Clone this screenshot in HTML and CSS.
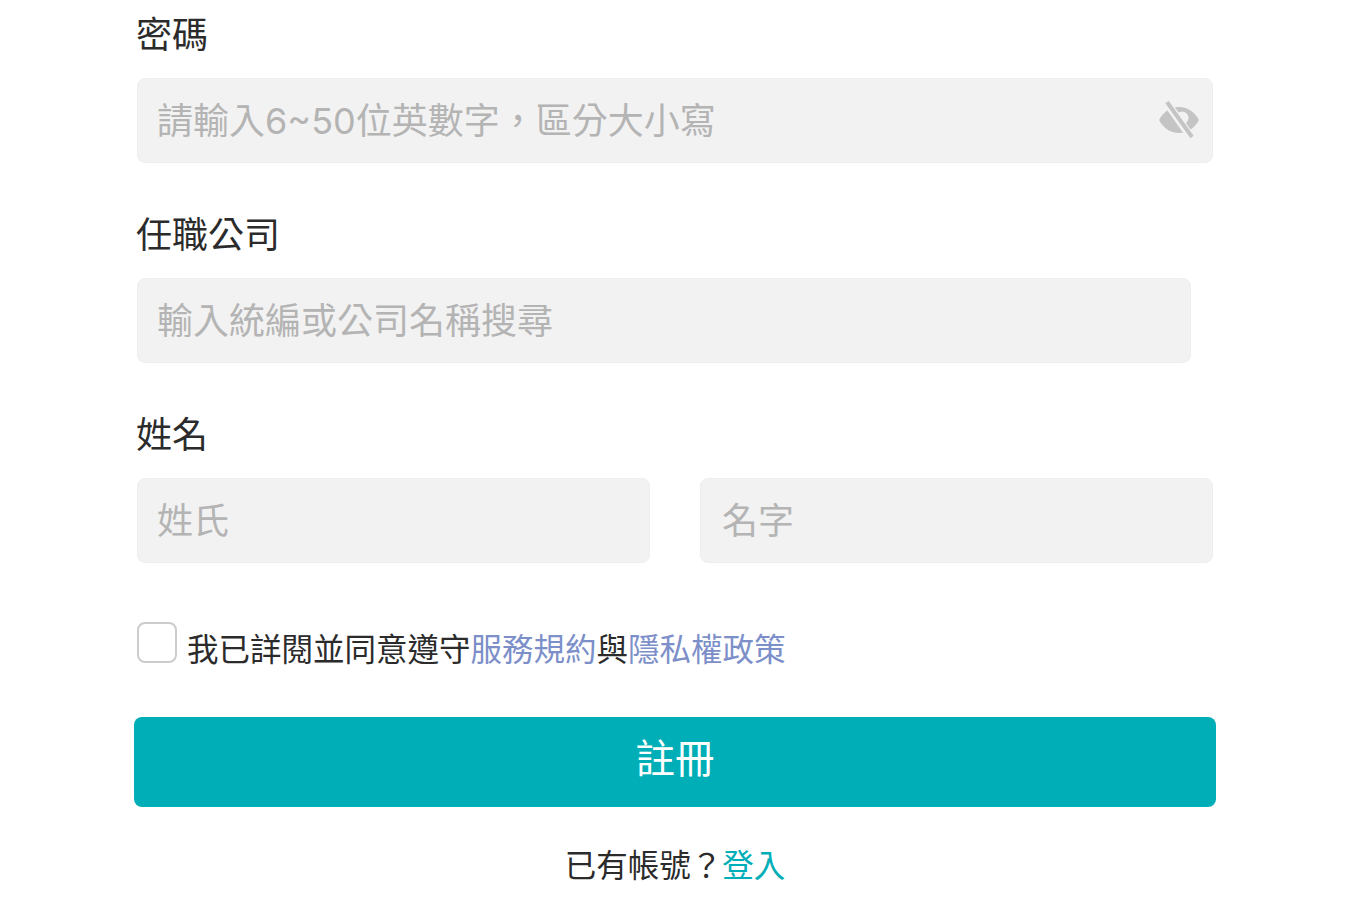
FILE: index.html
```html
<!DOCTYPE html>
<html lang="zh-Hant">
<head>
    <meta charset="UTF-8">
    <meta name="viewport" content="width=device-width, initial-scale=1.0">
    <title>註冊</title>
    <link rel="stylesheet" href="styles.css">
</head>
<body>
    <form class="signup-form">
        <div class="field">
            <label class="field-label" for="password">密碼</label>
            <div class="password-wrap">
                <input class="text-input" type="password" id="password" placeholder="請輸入6~50位英數字，區分大小寫">
                <svg class="eye-icon" viewBox="0 0 42 38" width="42" height="38" aria-hidden="true">
                    <path class="eye-shape" d="M1 19C6 10 13 6 21 6s15 4 20 13c-5 9-12 13-20 13S6 28 1 19z"/>
                    <circle class="eye-pupil" cx="24" cy="17" r="6.5"/>
                    <path class="eye-slash-gap" d="M9 2l24 34"/>
                    <path class="eye-slash" d="M9 1l25 35"/>
                </svg>
            </div>
        </div>

        <div class="field">
            <label class="field-label" for="company">任職公司</label>
            <input class="text-input company-input" type="text" id="company" placeholder="輸入統編或公司名稱搜尋">
        </div>

        <div class="field">
            <label class="field-label" for="lastName">姓名</label>
            <div class="name-row">
                <input class="text-input" type="text" id="lastName" placeholder="姓氏">
                <input class="text-input first-name" type="text" id="firstName" placeholder="名字">
            </div>
        </div>

        <label class="agree-row">
            <input class="agree-box" type="checkbox">
            <span class="agree-text">我已詳閱並同意遵守<a href="#">服務規約</a>與<a href="#">隱私權政策</a></span>
        </label>

        <button class="submit-btn" type="button">註冊</button>

        <p class="login-hint">已有帳號？<a href="#">登入</a></p>
    </form>
</body>
</html>
```

FILE: styles.css
```css
* {
    box-sizing: border-box;
}

body {
    margin: 0;
    background-color: #fff;
    font-family: Inter, "Noto Sans CJK TC", sans-serif;
    color: #2b2b2b;
}

.signup-form {
    width: 1076px;
    margin: 0 auto;
    padding-top: 14px;
}

.field {
    margin-bottom: 51px;
}

.field-label {
    display: block;
    height: 40px;
    line-height: 42px;
    margin-bottom: 24px;
    margin-left: -1px;
    font-size: 36px;
}

.text-input {
    display: block;
    width: 100%;
    height: 85px;
    padding: 0 19px;
    background: #f2f2f2;
    border: 1px solid #eee;
    border-radius: 8px;
    font-family: inherit;
    font-size: 36px;
}

.text-input::placeholder {
    color: #b4b4b4;
    opacity: 1;
}

.password-wrap {
    position: relative;
}

.eye-icon {
    position: absolute;
    top: 23px;
    right: 13px;
}

.eye-shape {
    fill: #c4c4c4;
}

.eye-pupil {
    fill: #f2f2f2;
}

.eye-slash-gap {
    stroke: #f2f2f2;
    stroke-width: 8;
    fill: none;
}

.eye-slash {
    stroke: #c4c4c4;
    stroke-width: 4;
    fill: none;
}

.company-input {
    width: 1054px;
}

.name-row {
    display: grid;
    grid-template-columns: 1fr 1fr;
    gap: 50px;
}

.name-row .first-name {
    padding-left: 21px;
}

.agree-row {
    display: flex;
    align-items: flex-start;
    margin-top: 59px;
    height: 41px;
}

.agree-box {
    appearance: none;
    width: 40px;
    height: 41px;
    margin: 0 10px 0 0;
    background: #fff;
    border: 2px solid #ccc;
    border-radius: 8px;
}

.agree-text {
    margin-top: 7px;
    font-size: 31.5px;
    line-height: 42px;
}

.agree-text a {
    color: #7d8fc9;
    text-decoration: none;
}

.submit-btn {
    display: block;
    width: 1082px;
    height: 90px;
    margin: 54px -3px 0;
    padding: 0 0 14px;
    background: #00aeb8;
    border: none;
    border-radius: 8px;
    color: #fff;
    font-family: inherit;
    font-size: 39.5px;
}

.login-hint {
    margin: 38px 0 0;
    text-align: center;
    font-size: 31.5px;
    line-height: 42px;
}

.login-hint a {
    color: #00aeb8;
    text-decoration: none;
}
```
